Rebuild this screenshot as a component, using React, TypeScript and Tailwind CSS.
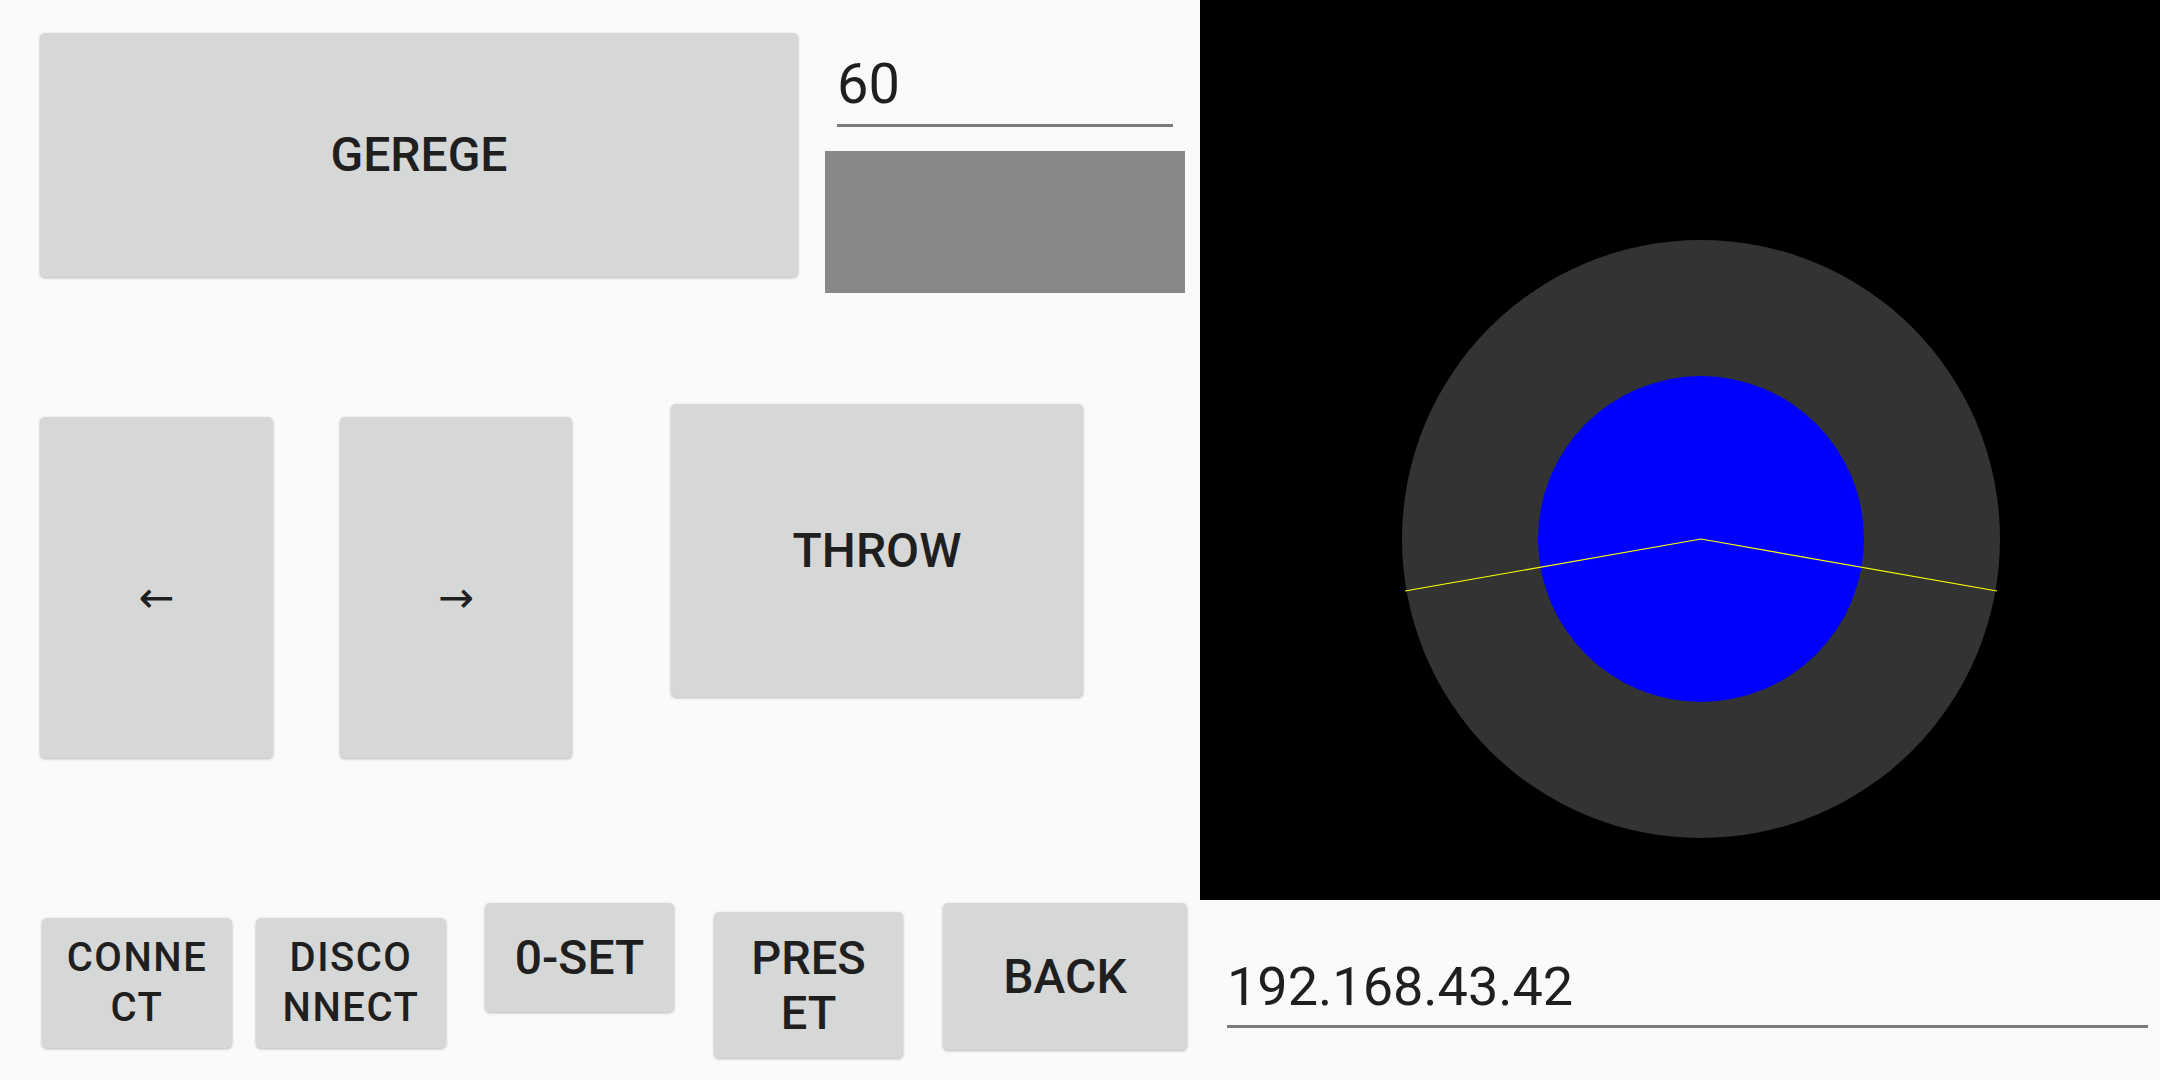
import React from 'react'

type BtnProps = { className: string; text: string[]; textClass?: string }

function Btn({ className, text, textClass = 'text-[48px] leading-[56px]' }: BtnProps) {
  return (
    <button
      className={`shrink-0 flex flex-col items-center justify-center rounded-[5px] bg-[#d6d7d7] shadow-[0_1px_3px_rgba(0,0,0,0.28)] text-[#1f1f1f] font-medium uppercase ${className}`}
    >
      {text.map((line, i) => (
        <span key={i} className={`block ${textClass}`}>{line}</span>
      ))}
    </button>
  )
}

function Gauge() {
  return (
    <svg width="960" height="900" viewBox="0 0 960 900" className="block">
      <rect width="960" height="900" fill="#000000" />
      <circle cx="501" cy="539" r="299" fill="#333333" />
      <circle cx="501" cy="539" r="163" fill="#0000ff" />
      <polyline points="205,591 501,539 797,591" fill="none" stroke="#ffff00" strokeWidth="1.2" />
    </svg>
  )
}

const big = 'text-[48px] leading-[56px] tracking-[0px]'
const small = 'text-[40px] leading-[50px] tracking-[1.5px]'
const arrow = "text-[43px] leading-[44px] pt-[18px] font-normal font-['DejaVu_Sans',sans-serif]"

export default function App() {
  return (
    <div className="w-[2160px] h-[1080px] flex bg-[#fafafa] overflow-hidden font-['Roboto','Noto_Sans',sans-serif]">
      {/* left controls */}
      <div className="w-[1200px] flex flex-col">
        <div className="flex items-start pt-[33px]">
          <Btn className="ml-[40px] w-[758px] h-[244px]" text={['Gerege']} textClass={big} />
          <div className="ml-[27px] w-[360px] flex flex-col">
            <div className="ml-[12px] w-[336px] pt-[18px] pb-[7px] border-b-[3px] border-[#7a7a7a] text-[56px] leading-[66px] text-[#1f1f1f]">
              60
            </div>
            <div className="mt-[24px] h-[142px] bg-[#888888]" />
          </div>
        </div>

        <div className="flex items-start mt-[111px]">
          <Btn className="ml-[40px] mt-[13px] w-[233px] h-[341px]" text={['←']} textClass={arrow} />
          <Btn className="ml-[67px] mt-[13px] w-[232px] h-[341px]" text={['→']} textClass={arrow} />
          <Btn className="ml-[99px] w-[412px] h-[293px]" text={['Throw']} textClass={big} />
        </div>

        <div className="flex items-start mt-[145px]">
          <Btn className="ml-[42px] mt-[15px] w-[190px] h-[130px]" text={['CONNE', 'CT']} textClass={small} />
          <Btn className="ml-[24px] mt-[15px] w-[190px] h-[130px]" text={['DISCO', 'NNECT']} textClass={small} />
          <Btn className="ml-[39px] w-[189px] h-[109px]" text={['0-SET']} textClass={big} />
          <Btn className="ml-[40px] mt-[9px] w-[189px] h-[146px]" text={['PRES', 'ET']} textClass="text-[47px] leading-[55px] tracking-[0px]" />
          <Btn className="ml-[40px] w-[244px] h-[147px]" text={['BACK']} textClass={big} />
        </div>
      </div>

      {/* right: view + address */}
      <div className="w-[960px] flex flex-col">
        <Gauge />
        <div className="ml-[27px] w-[921px] pt-[54px] pb-[5px] border-b-[3px] border-[#7a7a7a] text-[54px] leading-[66px] text-[#1f1f1f]">
          192.168.43.42
        </div>
      </div>
    </div>
  )
}
